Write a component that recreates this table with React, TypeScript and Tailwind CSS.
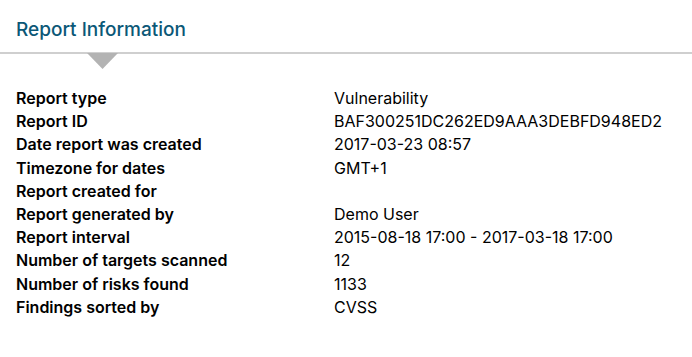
import React from "react";

const rows: [string, string][] = [
  ["Report type", "Vulnerability"],
  ["Report ID", "BAF300251DC262ED9AAA3DEBFD948ED2"],
  ["Date report was created", "2017-03-23 08:57"],
  ["Timezone for dates", "GMT+1"],
  ["Report created for", ""],
  ["Report generated by", "Demo User"],
  ["Report interval", "2015-08-18 17:00 - 2017-03-18 17:00"],
  ["Number of targets scanned", "12"],
  ["Number of risks found", "1133"],
  ["Findings sorted by", "CVSS"],
];

export default function App() {
  return (
    <div
      className="w-[692px] h-[357px] bg-white overflow-hidden"
      style={{ fontFamily: "Inter, 'Liberation Sans', sans-serif" }}
    >
      <div className="h-[52px] pl-4 pt-[18px]">
        <h1 className="text-[19px] leading-[24px] text-[#0b5877] font-medium">Report Information</h1>
      </div>
      <div className="relative h-[2px] bg-[#cfcfcf]">
        <svg
          className="absolute left-[87px] top-[1px]"
          width="31"
          height="17"
          viewBox="0 0 31 17"
        >
          <polygon points="0,0 31,0 15.5,16" fill="#b3b3b3" />
        </svg>
      </div>
      <div className="pl-4 pt-[33px] grid grid-cols-[318px_1fr] text-[16px] leading-[23.2px] text-black">
        {rows.map(([k, v]) => (
          <React.Fragment key={k}>
            <div className="font-semibold h-[23.2px]">{k}</div>
            <div className="h-[23.2px]">{v}</div>
          </React.Fragment>
        ))}
      </div>
    </div>
  );
}
